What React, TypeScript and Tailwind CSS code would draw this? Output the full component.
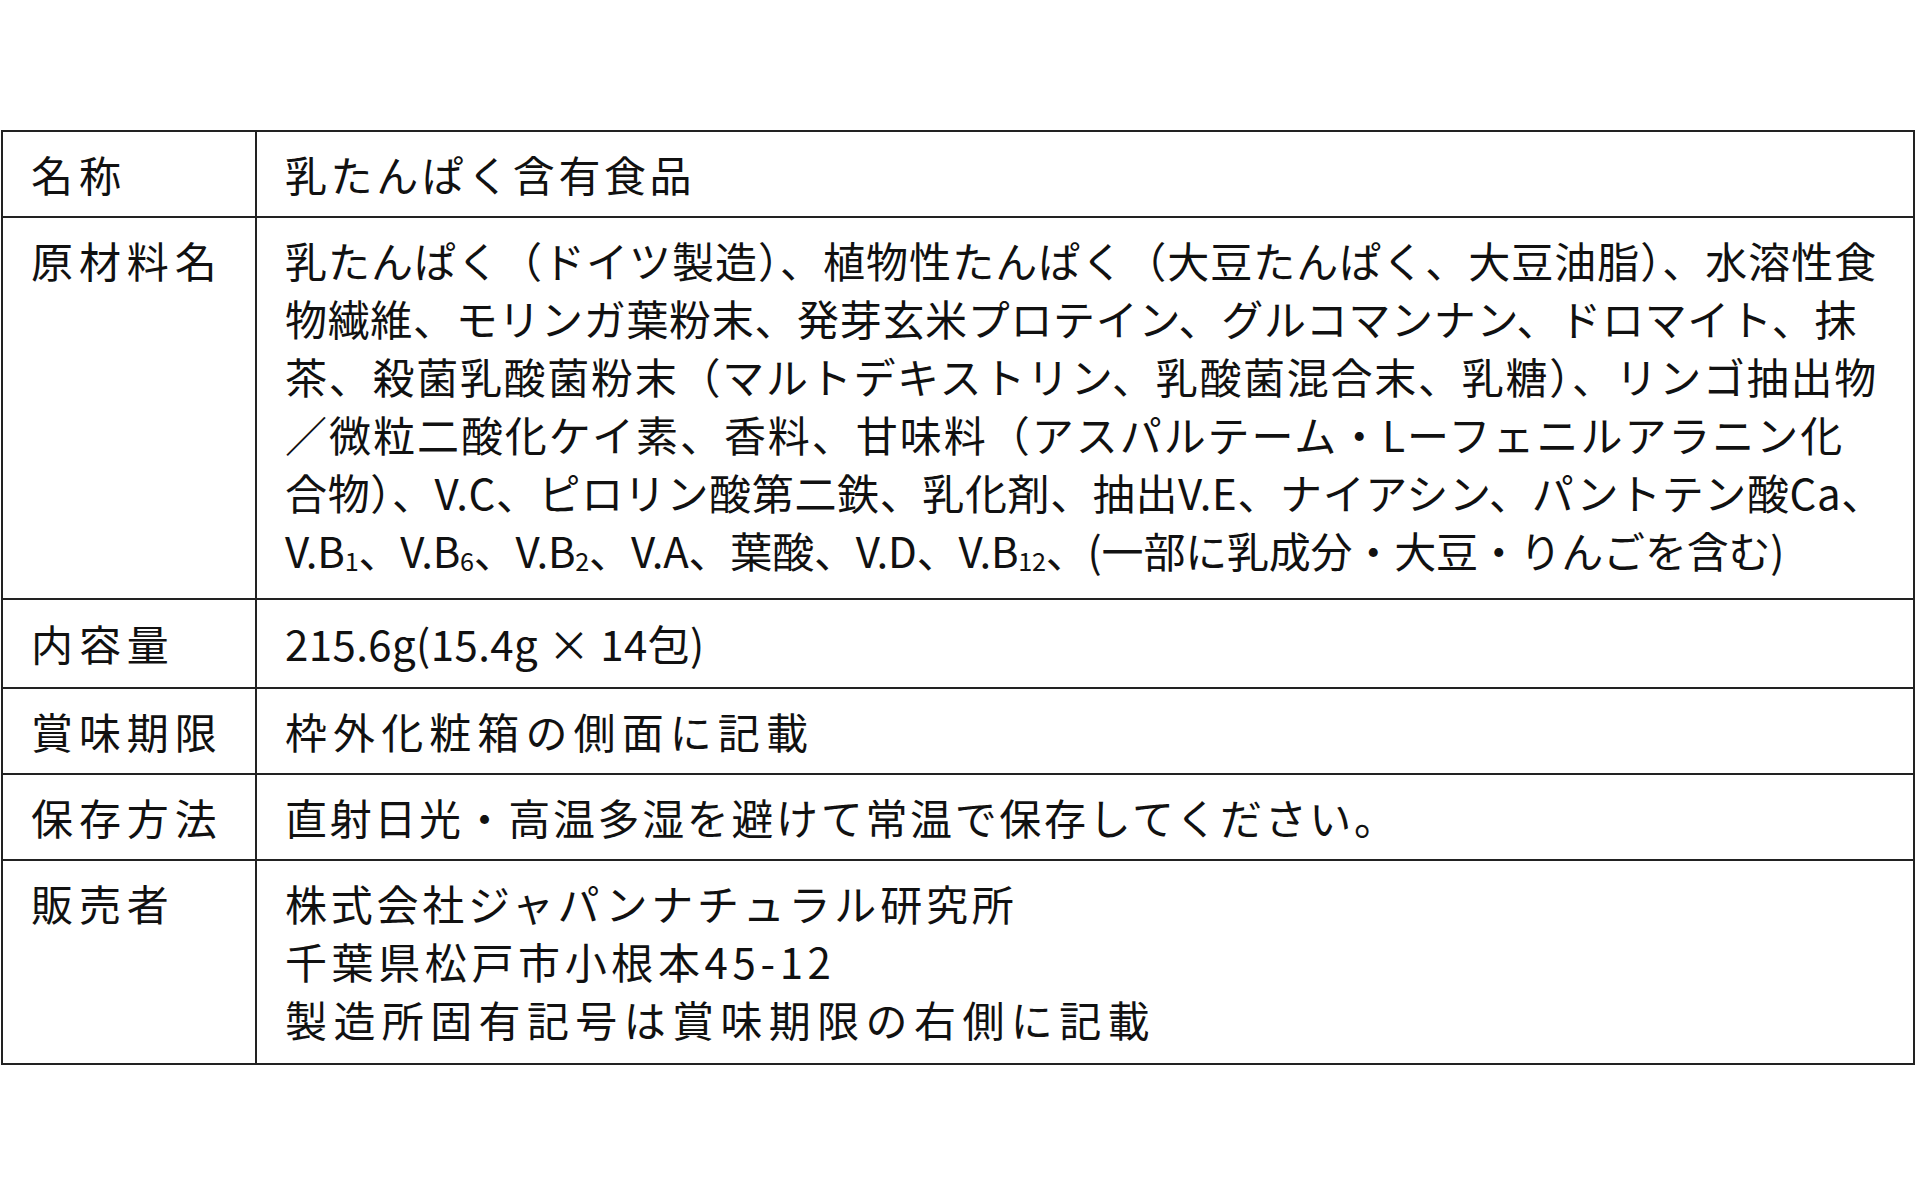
import React from "react";

type Line = {
  text: React.ReactNode;
  track: string;
};

type Row = {
  label: string;
  pad: string;
  lines: Line[];
};

const Sub = ({ children }: { children: React.ReactNode }) => (
  <span className="text-[0.6em] leading-[0] align-[-0.12em]">{children}</span>
);

// tracking per line so the line lengths follow the original layout
const rows: Row[] = [
  {
    label: "名称",
    pad: "pt-[13px] pb-[13px]",
    lines: [{ text: "乳たんぱく含有食品", track: "tracking-[0.085em]" }],
  },
  {
    label: "原材料名",
    pad: "pt-[13px] pb-[19px]",
    lines: [
      {
        text: "乳たんぱく（ドイツ製造）、植物性たんぱく（大豆たんぱく、大豆油脂）、水溶性食",
        track: "tracking-[0.024em]",
      },
      {
        text: "物繊維、モリンガ葉粉末、発芽玄米プロテイン、グルコマンナン、ドロマイト、抹",
        track: "tracking-[0.016em]",
      },
      {
        text: "茶、殺菌乳酸菌粉末（マルトデキストリン、乳酸菌混合末、乳糖）、リンゴ抽出物",
        track: "tracking-[0.041em]",
      },
      {
        text: "／微粒二酸化ケイ素、香料、甘味料（アスパルテーム・Lーフェニルアラニン化",
        track: "tracking-[0.047em]",
      },
      {
        text: "合物）、V.C、ピロリン酸第二鉄、乳化剤、抽出V.E、ナイアシン、パントテン酸Ca、",
        track: "tracking-[0.015em]",
      },
      {
        text: (
          <>
            V.B<Sub>1</Sub>、V.B<Sub>6</Sub>、V.B<Sub>2</Sub>、V.A、葉酸、V.D、V.B
            <Sub>12</Sub>、(一部に乳成分・大豆・りんごを含む)
          </>
        ),
        track: "tracking-[-0.005em]",
      },
    ],
  },
  {
    label: "内容量",
    pad: "pt-[14px] pb-[15px]",
    lines: [{ text: "215.6g(15.4g × 14包)", track: "tracking-[0.01em]" }],
  },
  {
    label: "賞味期限",
    pad: "pt-[13px] pb-[13px]",
    lines: [{ text: "枠外化粧箱の側面に記載", track: "tracking-[0.145em]" }],
  },
  {
    label: "保存方法",
    pad: "pt-[13px] pb-[13px]",
    lines: [
      {
        text: "直射日光・高温多湿を避けて常温で保存してください。",
        track: "tracking-[0.063em]",
      },
    ],
  },
  {
    label: "販売者",
    pad: "pt-[13px] pb-[15px]",
    lines: [
      { text: "株式会社ジャパンナチュラル研究所", track: "tracking-[0.09em]" },
      { text: "千葉県松戸市小根本45-12", track: "tracking-[0.11em]" },
      { text: "製造所固有記号は賞味期限の右側に記載", track: "tracking-[0.152em]" },
    ],
  },
];

export default function App() {
  return (
    <div className="w-[1920px] h-[1200px] bg-white pt-[130px] pl-[1px] font-['Noto_Sans_CJK_JP',sans-serif] text-[#111]">
      <div className="w-[1914px] border-2 border-[#222]">
        {rows.map((row, i) => (
          <div
            key={row.label}
            className={
              i === 0
                ? "grid grid-cols-[254px_1fr]"
                : "grid grid-cols-[254px_1fr] border-t-2 border-[#222]"
            }
          >
            <div
              className={`border-r-2 border-[#222] pl-[28px] ${row.pad} text-[42px] leading-[58px] tracking-[0.14em]`}
            >
              {row.label}
            </div>
            <div className={`pl-[28px] ${row.pad} text-[42px] leading-[58px]`}>
              {row.lines.map((line, j) => (
                <div key={j} className={`whitespace-nowrap ${line.track}`}>
                  {line.text}
                </div>
              ))}
            </div>
          </div>
        ))}
      </div>
    </div>
  );
}
